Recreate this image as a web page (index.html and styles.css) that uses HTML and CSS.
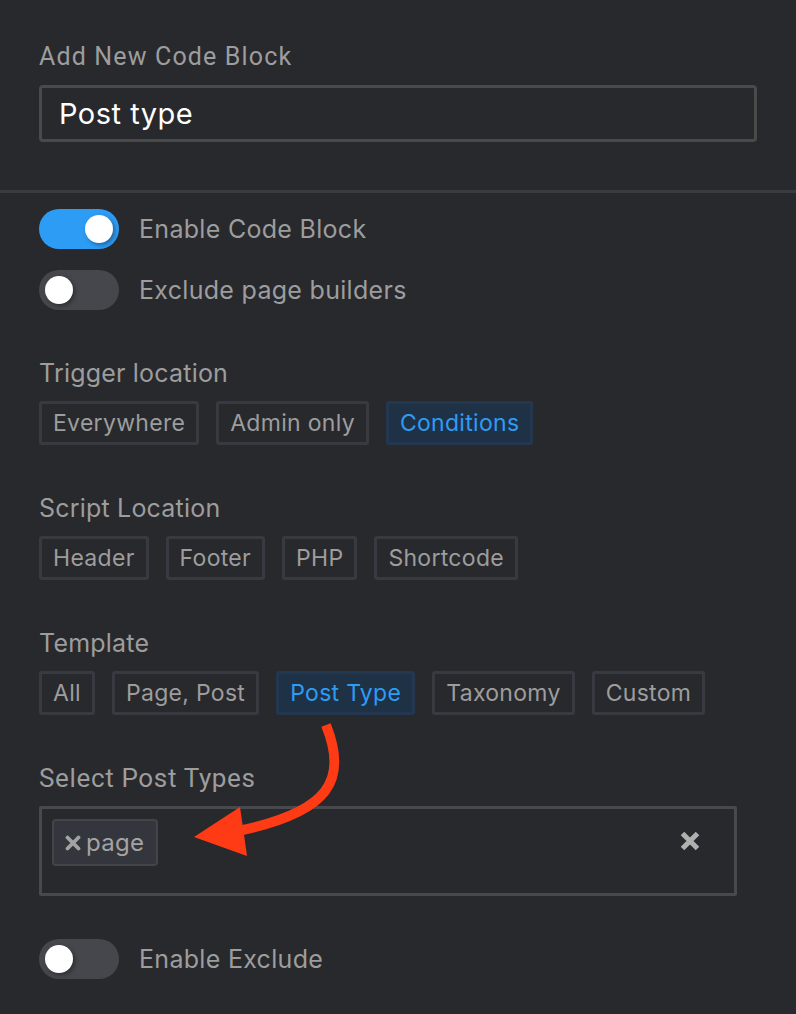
FILE: index.html
```html
<!DOCTYPE html>
<html lang="en">
<head>
    <meta charset="UTF-8">
    <meta name="viewport" content="width=device-width, initial-scale=1.0">
    <title>Add New Code Block</title>
    <link rel="stylesheet" href="styles.css">
</head>
<body>
<div class="panel">
    <!-- Title block -->
    <div class="title-block">
        <div class="field-label narrow">Add New Code Block</div>
        <div class="text-input">Post type</div>
    </div>

    <div class="separator"></div>

    <div class="settings">
        <div class="toggles">
            <div class="toggle-row">
                <div class="switch on"><span class="knob"></span></div>
                <span class="toggle-label">Enable Code Block</span>
            </div>
            <div class="toggle-row">
                <div class="switch"><span class="knob"></span></div>
                <span class="toggle-label">Exclude page builders</span>
            </div>
        </div>

        <div class="group">
            <div class="group-label">Trigger location</div>
            <div class="button-row">
                <div class="option">Everywhere</div>
                <div class="option">Admin only</div>
                <div class="option active">Conditions</div>
            </div>
        </div>

        <div class="group">
            <div class="group-label">Script Location</div>
            <div class="button-row">
                <div class="option">Header</div>
                <div class="option">Footer</div>
                <div class="option">PHP</div>
                <div class="option">Shortcode</div>
            </div>
        </div>

        <div class="group">
            <div class="group-label">Template</div>
            <div class="button-row">
                <div class="option">All</div>
                <div class="option">Page, Post</div>
                <div class="option active">Post Type</div>
                <div class="option">Taxonomy</div>
                <div class="option">Custom</div>
            </div>
        </div>

        <div class="group">
            <div class="group-label narrow wide">Select Post Types</div>
            <div class="multi-select">
                <div class="tag">
                    <svg class="tag-x" width="16" height="16" viewBox="0 0 16 16"><path d="M2.5 2.5L13.5 13.5M13.5 2.5L2.5 13.5" stroke="#a3a3a3" stroke-width="3.8" stroke-linecap="round"/></svg>
                    <span>page</span>
                </div>
                <svg class="clear-x" width="20" height="20" viewBox="0 0 20 20"><path d="M2.5 2.5L17.5 17.5M17.5 2.5L2.5 17.5" stroke="#b0b0b0" stroke-width="5"/></svg>
            </div>
        </div>

        <div class="toggle-row last">
            <div class="switch"><span class="knob"></span></div>
            <span class="toggle-label">Enable Exclude</span>
        </div>
    </div>

    <!-- Annotation arrow -->
    <svg class="annotation" width="796" height="1014" viewBox="0 0 796 1014">
        <path d="M326 725 C 348 780, 330 812, 238 831" fill="none" stroke="#ff3b16" stroke-width="10"/>
        <polygon points="194,837 240,807 247,856" fill="#ff3b16"/>
    </svg>
</div>
</body>
</html>
```

FILE: styles.css
```css
/* Dark settings panel */
body {
    margin: 0;
    background-color: #28292d;
    font-family: Inter, "Noto Sans", sans-serif;
    color: #9d9d9d;
}
.panel {
    position: relative;
    width: 796px;
    height: 1014px;
    overflow: hidden;
}
.title-block {
    padding: 42px 39px 48px 39px;
    display: flex;
    flex-direction: column;
    gap: 13px;
}
.field-label {
    font-size: 25px;
    line-height: 30px;
}
.narrow {
    font-family: Roboto, "Liberation Sans", sans-serif;
    letter-spacing: 1.15px;
}
.narrow.wide {
    font-size: 26px;
    letter-spacing: 0.65px;
}
.text-input {
    height: 51px;
    border: 3px solid #4a4a4b;
    border-radius: 4px;
    padding: 0 17px;
    display: flex;
    align-items: center;
    font-size: 29px;
    letter-spacing: 0.5px;
    color: #ffffff;
}
.separator {
    height: 3px;
    background-color: #383b42;
}
.settings {
    padding: 16px 39px 0 39px;
    display: flex;
    flex-direction: column;
}
.toggles {
    display: flex;
    flex-direction: column;
    gap: 21px;
}
.toggle-row {
    display: flex;
    align-items: center;
    gap: 20px;
}
.toggle-row.last {
    margin-top: 43px;
}
.switch {
    position: relative;
    width: 80px;
    height: 40px;
    border-radius: 20px;
    background-color: #45474c;
    flex-shrink: 0;
}
.switch.on {
    background-color: #2d9cf5;
}
.knob {
    position: absolute;
    top: 6px;
    left: 6px;
    width: 28px;
    height: 28px;
    border-radius: 50%;
    background-color: #ffffff;
    box-shadow: 2px 2px 4px rgba(0, 0, 0, 0.35);
}
.switch.on .knob {
    left: 46px;
}
.toggle-label {
    font-size: 25px;
    line-height: 30px;
    letter-spacing: 0.3px;
}
.group {
    margin-top: 48px;
    display: flex;
    flex-direction: column;
    gap: 13px;
}
.group-label {
    font-size: 25px;
    line-height: 30px;
    letter-spacing: 0.2px;
}
.button-row {
    display: flex;
    gap: 17px;
}
.option {
    height: 38px;
    padding: 0 11px;
    border: 3px solid #393a41;
    border-radius: 3px;
    display: flex;
    align-items: center;
    font-size: 23px;
    letter-spacing: 0.3px;
    color: #9d9d9d;
}
.option.active {
    background-color: #1f3145;
    border-color: #233850;
    color: #2d9cf5;
}
.multi-select {
    width: 698px;
    height: 90px;
    border: 3px solid #48494c;
    border-radius: 2px;
    padding: 10px 34px 10px 10px;
    box-sizing: border-box;
    display: flex;
    align-items: flex-start;
    justify-content: space-between;
}
.tag {
    height: 43px;
    padding: 0 12px 0 11px;
    border: 2px solid #42444a;
    border-radius: 4px;
    background-color: #34363d;
    display: flex;
    align-items: center;
    gap: 5px;
    font-size: 24px;
    letter-spacing: 0.3px;
    color: #a3a3a3;
}
.clear-x {
    margin-top: 12px;
}
.annotation {
    position: absolute;
    top: 0;
    left: 0;
    pointer-events: none;
}
```
